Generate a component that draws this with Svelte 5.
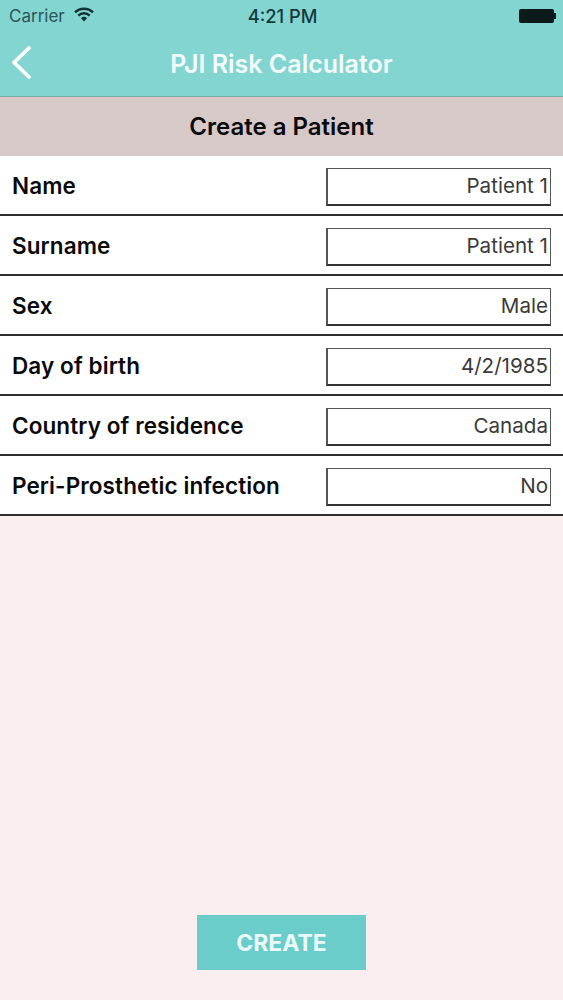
<script lang="ts">
	const rows = [
		{ label: 'Name', value: 'Patient 1' },
		{ label: 'Surname', value: 'Patient 1' },
		{ label: 'Sex', value: 'Male' },
		{ label: 'Day of birth', value: '4/2/1985' },
		{ label: 'Country of residence', value: 'Canada' },
		{ label: 'Peri-Prosthetic infection', value: 'No' }
	];
</script>

<div class="screen">
	<header class="top">
		<div class="status">
			<div class="status-left">
				<span class="carrier">Carrier</span>
				<svg class="wifi" width="20" height="15" viewBox="0 0 20 15" aria-hidden="true">
					<path d="M1 5.4 A12.8 12.8 0 0 1 19 5.4" fill="none" stroke="#123437" stroke-width="2.4" />
					<path d="M4.3 8.6 A8 8 0 0 1 15.7 8.6" fill="none" stroke="#123437" stroke-width="2.4" />
					<path d="M7 11.2 A4 4 0 0 1 13 11.2 L10 14.4 Z" fill="#123437" />
				</svg>
			</div>
			<span class="time">4:21 PM</span>
			<div class="battery">
				<span class="cell"></span>
				<span class="nub"></span>
			</div>
		</div>
		<div class="nav">
			<svg class="back" width="24" height="36" viewBox="0 0 24 36" aria-hidden="true">
				<path d="M20 3 L5 17.5 L20 32" fill="none" stroke="#fff" stroke-width="3.8" stroke-linecap="round" stroke-linejoin="round" />
			</svg>
			<span class="title">PJI Risk Calculator</span>
		</div>
	</header>

	<div class="heading">Create a Patient</div>

	<div class="rows">
		{#each rows as row}
			<div class="row">
				<span class="label">{row.label}</span>
				<div class="field">{row.value}</div>
			</div>
		{/each}
	</div>

	<div class="actions">
		<button class="create" type="button">CREATE</button>
	</div>
</div>

<style>
	:global(body) {
		margin: 0;
		background: #faeeee;
	}

	.screen {
		display: flex;
		flex-direction: column;
		height: 1000px;
		overflow: hidden;
		background: #faeeee;
		font-family: Inter, 'Liberation Sans', sans-serif;
	}

	.top {
		height: 96px;
		background: #82d5d1;
		border-bottom: 1px solid #7fa8a4;
		box-sizing: content-box;
	}

	.status {
		display: grid;
		grid-template-columns: 1fr auto 1fr;
		align-items: center;
		height: 31px;
		padding: 0 7px 0 9px;
	}

	.status-left {
		display: flex;
		align-items: center;
		gap: 9px;
	}

	.carrier {
		font-size: 17px;
		color: #2b5558;
	}

	.wifi {
		margin-top: -2px;
	}

	.time {
		font-size: 18.3px;
		font-weight: 500;
		color: #16393c;
	}

	.battery {
		display: flex;
		align-items: center;
		justify-content: flex-end;
	}

	.cell {
		width: 35px;
		height: 14px;
		border-radius: 2px;
		background: #0c1a1c;
	}

	.nub {
		width: 2px;
		height: 6px;
		background: #0c1a1c;
	}

	.nav {
		position: relative;
		display: flex;
		align-items: center;
		justify-content: center;
		height: 65px;
	}

	.back {
		position: absolute;
		left: 9px;
		top: 14px;
	}

	.title {
		font-size: 25px;
		font-weight: 600;
		color: #f2fbfa;
	}

	.heading {
		display: flex;
		align-items: center;
		justify-content: center;
		height: 59px;
		background: #d7c9c8;
		color: #0a0a0a;
		font-size: 24px;
		font-weight: 600;
	}

	.rows {
		background: #fff;
	}

	.row {
		display: flex;
		align-items: flex-start;
		justify-content: space-between;
		box-sizing: border-box;
		height: 60px;
		padding: 12px 12px 0;
		border-bottom: 2px solid #2e2e2e;
	}

	.label {
		line-height: 36px;
		font-size: 22.5px;
		font-weight: 600;
		letter-spacing: 0.1px;
		color: #0a0a0a;
	}

	.field {
		box-sizing: border-box;
		width: 225px;
		height: 38px;
		padding-right: 2px;
		border: 1px solid #555;
		border-bottom: 2px solid #333;
		border-left-width: 2px;
		line-height: 34px;
		text-align: right;
		font-size: 20.6px;
		color: #3a3a3a;
		background: #fff;
	}

	.actions {
		display: flex;
		justify-content: center;
		margin-top: auto;
		padding-bottom: 30px;
	}

	.create {
		width: 169px;
		height: 55px;
		padding: 0;
		border: 0;
		background: #6bcdc9;
		color: #eafaf8;
		font-family: inherit;
		font-size: 23px;
		font-weight: 700;
	}
</style>
